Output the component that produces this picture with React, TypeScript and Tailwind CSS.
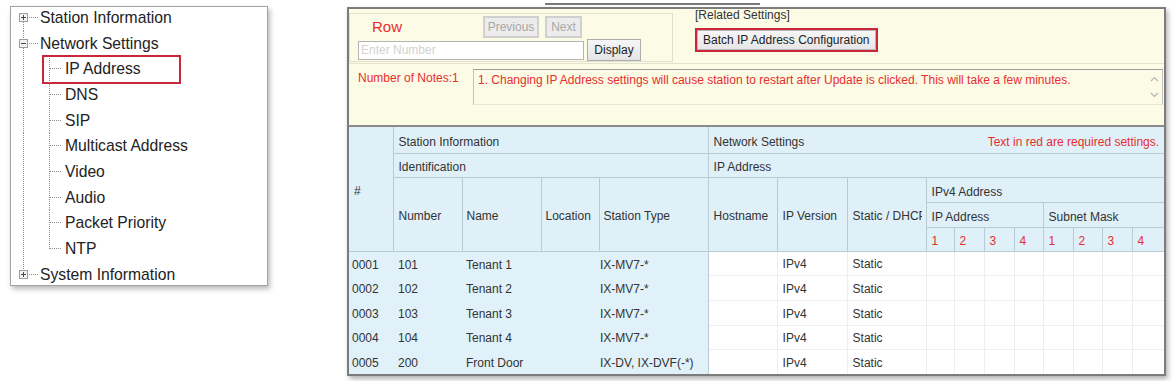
import React from "react";

const RED = "text-[#e62e2e]";

type TopItem = { kind: "top"; label: string; icon: "plus" | "minus"; up: boolean; down: boolean };
type ChildItem = { kind: "child"; label: string; last: boolean; boxed?: boolean };
type Item = TopItem | ChildItem;

const items: Item[] = [
  { kind: "top", label: "Station Information", icon: "plus", up: false, down: true },
  { kind: "top", label: "Network Settings", icon: "minus", up: true, down: true },
  { kind: "child", label: "IP Address", last: false, boxed: true },
  { kind: "child", label: "DNS", last: false },
  { kind: "child", label: "SIP", last: false },
  { kind: "child", label: "Multicast Address", last: false },
  { kind: "child", label: "Video", last: false },
  { kind: "child", label: "Audio", last: false },
  { kind: "child", label: "Packet Priority", last: false },
  { kind: "child", label: "NTP", last: true },
  { kind: "top", label: "System Information", icon: "plus", up: true, down: false },
];

const DOT = "#8e8e8e";

function TopGutter({ item }: { item: TopItem }) {
  return (
    <svg width="29" height="26" className="shrink-0 overflow-visible">
      {item.up && <line x1="12.5" y1="0" x2="12.5" y2="8" stroke={DOT} strokeDasharray="1 1" />}
      {item.down && <line x1="12.5" y1="17" x2="12.5" y2="26" stroke={DOT} strokeDasharray="1 1" />}
      <rect x="8.5" y="8.5" width="8" height="8" fill="#f3f3f3" stroke="#9c9c9c" />
      <line x1="10" y1="12.5" x2="15" y2="12.5" stroke="#3b4a5a" />
      {item.icon === "plus" && <line x1="12.5" y1="10" x2="12.5" y2="15" stroke="#3b4a5a" />}
      <line x1="18" y1="12.5" x2="28" y2="12.5" stroke={DOT} strokeDasharray="1 1" />
    </svg>
  );
}

function ChildGutter({ item }: { item: ChildItem }) {
  return (
    <svg width="54" height="26" className="shrink-0 overflow-visible">
      <line x1="12.5" y1="0" x2="12.5" y2="26" stroke={DOT} strokeDasharray="1 1" />
      <line x1="38.5" y1="0" x2="38.5" y2={item.last ? 13 : 26} stroke={DOT} strokeDasharray="1 1" />
      <line x1="39" y1="12.5" x2="50" y2="12.5" stroke={DOT} strokeDasharray="1 1" />
    </svg>
  );
}

function Tree() {
  return (
    <div className="mt-[6px] ml-[10px] w-[258px] h-[280px] border border-[#a2a2a2] bg-white shadow-[2px_3px_5px_rgba(0,0,0,0.28)] overflow-hidden shrink-0">
      <div className="-mt-[2px] flex flex-col">
        {items.map((it) => (
          <div key={it.label} className="relative h-[25.7px] flex items-center">
            {it.kind === "top" ? <TopGutter item={it} /> : <ChildGutter item={it} />}
            <span className="text-[15.7px] text-[#222] whitespace-nowrap leading-none">{it.label}</span>
            {it.kind === "child" && it.boxed && (
              <div className="absolute left-[31px] top-[-1px] w-[139px] h-[29px] border-2 border-[#c8283a]" />
            )}
          </div>
        ))}
      </div>
    </div>
  );
}

function Chevron({ up }: { up: boolean }) {
  return (
    <svg width="9" height="6" viewBox="0 0 9 6">
      <polyline
        points={up ? "1,5 4.5,1.5 8,5" : "1,1 4.5,4.5 8,1"}
        fill="none"
        stroke="#b4b4b4"
        strokeWidth="1.2"
      />
    </svg>
  );
}

const th =
  "border border-[#b7cbd5] bg-[#dff0f8] font-normal text-left align-middle pl-[4px] pt-[4px] whitespace-nowrap overflow-hidden";
const thR =
  "border border-[#b7cbd5] bg-[#dff0f8] font-normal text-left align-middle pl-[5px] pt-[4px] whitespace-nowrap overflow-hidden";
const tdL = "bg-[#e0f1f9] whitespace-nowrap pt-[2px]";
const tdW = "bg-white border border-[#eeeeee] whitespace-nowrap pl-[5px] pt-[2px]";

const rows = [
  { id: "0001", num: "101", name: "Tenant 1", type: "IX-MV7-*" },
  { id: "0002", num: "102", name: "Tenant 2", type: "IX-MV7-*" },
  { id: "0003", num: "103", name: "Tenant 3", type: "IX-MV7-*" },
  { id: "0004", num: "104", name: "Tenant 4", type: "IX-MV7-*" },
  { id: "0005", num: "200", name: "Front Door", type: "IX-DV, IX-DVF(-*)" },
];

function TopArea() {
  return (
    <div className="h-[118px] bg-[#fbfbe6] border-b-2 border-[#8a8a8a] flex flex-col">
      <div className="h-[55px] flex border-b border-[#e3e3d0]">
        <div className="mt-[4px] w-[324px] h-[49px] border border-[#e0e0cc] flex flex-col">
          <div className="h-[25px] flex items-center">
            <span className={`ml-[22px] w-[111px] text-[15px] leading-none ${RED}`}>Row</span>
            <div className="w-[56px] h-[22px] border-2 border-[#d0d0d0] bg-[#ececec] text-[12px] text-[#a8a8a8] flex items-center justify-center">
              Previous
            </div>
            <div className="ml-[6px] w-[37px] h-[22px] border-2 border-[#d0d0d0] bg-[#ececec] text-[12px] text-[#a8a8a8] flex items-center justify-center">
              Next
            </div>
          </div>
          <div className="h-[22px] flex items-center">
            <div className="ml-[8px] w-[226px] h-[19px] border border-[#b4b4b4] bg-white text-[12px] text-[#d2d2d2] pl-[2px] flex items-center">
              Enter Number
            </div>
            <div className="ml-[3px] w-[54px] h-[22px] border border-[#adadad] bg-gradient-to-b from-[#f6f6f6] to-[#e4e4e4] text-[12px] text-[#222] flex items-center justify-center">
              Display
            </div>
          </div>
        </div>
        <div className="ml-[22px] flex flex-col">
          <div className="text-[12px] leading-[13px] text-[#333]">[Related Settings]</div>
          <div className="mt-[6px] w-[183px] h-[24px] border-2 border-[#c8263a]">
            <div className="w-full h-full bg-gradient-to-b from-[#f6f6f6] to-[#e6e6e6] border border-[#b8b8b8] text-[12px] text-[#222] pl-[5px] flex items-center">
              Batch IP Address Configuration
            </div>
          </div>
        </div>
      </div>
      <div className="flex">
        <div className={`ml-[9px] w-[115px] mt-[7px] text-[12px] leading-[14px] ${RED}`}>Number of Notes:1</div>
        <div className="mt-[5px] mr-[1px] flex-1 h-[36px] border border-[#c4c4c4] border-t-[#9e9e9e] border-b-[#e6e6d8] bg-[#fbfbe6] flex">
          <div className={`flex-1 pl-[4px] pt-[3px] text-[12px] leading-[14px] ${RED}`}>
            1. Changing IP Address settings will cause station to restart after Update is clicked. This will take a few minutes.
          </div>
          <div className="w-[16px] flex flex-col items-center justify-between py-[6px]">
            <Chevron up />
            <Chevron up={false} />
          </div>
        </div>
      </div>
    </div>
  );
}

function DataTable() {
  const digits = ["1", "2", "3", "4"];
  return (
    <table className="table-fixed border-collapse w-[815px] text-[12px] text-[#333]">
      <colgroup>
        <col className="w-[44px]" />
        <col className="w-[69px]" />
        <col className="w-[79px]" />
        <col className="w-[58px]" />
        <col className="w-[109px]" />
        <col className="w-[69px]" />
        <col className="w-[70px]" />
        <col className="w-[79px]" />
        <col className="w-[28px]" />
        <col className="w-[30px]" />
        <col className="w-[30px]" />
        <col className="w-[29px]" />
        <col className="w-[30px]" />
        <col className="w-[29px]" />
        <col className="w-[30px]" />
        <col className="w-[32px]" />
      </colgroup>
      <thead>
        <tr className="h-[26px]">
          <th rowSpan={5} className={th + " border-t-0 border-l-0 pl-[5px]"}>
            #
          </th>
          <th colSpan={4} className={th + " border-t-0 pl-[5px]"}>
            Station Information
          </th>
          <th colSpan={11} className={thR + " border-t-0 border-r-0 pr-[5px]"}>
            <div className="flex justify-between">
              <span>Network Settings</span>
              <span className={RED}>Text in red are required settings.</span>
            </div>
          </th>
        </tr>
        <tr className="h-[24px]">
          <th colSpan={4} className={th + " pl-[5px]"}>
            Identification
          </th>
          <th colSpan={11} className={thR + " border-r-0"}>
            IP Address
          </th>
        </tr>
        <tr className="h-[25px]">
          <th rowSpan={3} className={th + " pl-[5px]"}>
            Number
          </th>
          <th rowSpan={3} className={th}>
            Name
          </th>
          <th rowSpan={3} className={th}>
            Location
          </th>
          <th rowSpan={3} className={th + " pl-[3px]"}>
            Station Type
          </th>
          <th rowSpan={3} className={thR}>
            Hostname
          </th>
          <th rowSpan={3} className={thR}>
            IP Version
          </th>
          <th rowSpan={3} className={thR + " pr-[4px]"}>
            <div className="overflow-hidden whitespace-nowrap">Static / DHCP</div>
          </th>
          <th colSpan={8} className={thR + " border-r-0"}>
            IPv4 Address
          </th>
        </tr>
        <tr className="h-[25px]">
          <th colSpan={4} className={thR}>
            IP Address
          </th>
          <th colSpan={4} className={thR + " border-r-0"}>
            Subnet Mask
          </th>
        </tr>
        <tr className="h-[24px]">
          {digits.map((d) => (
            <th key={"a" + d} className={thR + " " + RED}>
              {d}
            </th>
          ))}
          {digits.map((d) => (
            <th key={"b" + d} className={thR + " " + RED + (d === "4" ? " border-r-0" : "")}>
              {d}
            </th>
          ))}
        </tr>
      </thead>
      <tbody>
        {rows.map((r) => (
          <tr key={r.id} className="h-[24.7px]">
            <td className={tdL + " pl-[3px]"}>{r.id}</td>
            <td className={tdL + " pl-[5px]"}>{r.num}</td>
            <td className={tdL + " pl-[4px]"}>{r.name}</td>
            <td className={tdL}></td>
            <td className={tdL + " pl-[1px] border-r border-[#b7cbd5]"}>{r.type}</td>
            <td className={tdW}></td>
            <td className={tdW}>IPv4</td>
            <td className={tdW}>Static</td>
            <td className={tdW}></td>
            <td className={tdW}></td>
            <td className={tdW}></td>
            <td className={tdW}></td>
            <td className={tdW}></td>
            <td className={tdW}></td>
            <td className={tdW}></td>
            <td className={tdW + " border-r-0"}></td>
          </tr>
        ))}
      </tbody>
    </table>
  );
}

export default function App() {
  return (
    <div className="w-[1175px] h-[381px] bg-white flex items-start font-['Liberation_Sans',Arial,sans-serif] overflow-hidden">
      <Tree />
      <div className="ml-[79px] flex flex-col">
        <div className="mt-[3px] ml-[198px] w-[215px] h-[2px] bg-[#7a7a7a]" />
        <div className="mt-[2px] w-[819px] h-[369px] border-2 border-[#7c7c7c] bg-[#f4f8fa] shadow-[2px_3px_5px_rgba(0,0,0,0.3)] overflow-hidden">
          <TopArea />
          <DataTable />
        </div>
      </div>
    </div>
  );
}
